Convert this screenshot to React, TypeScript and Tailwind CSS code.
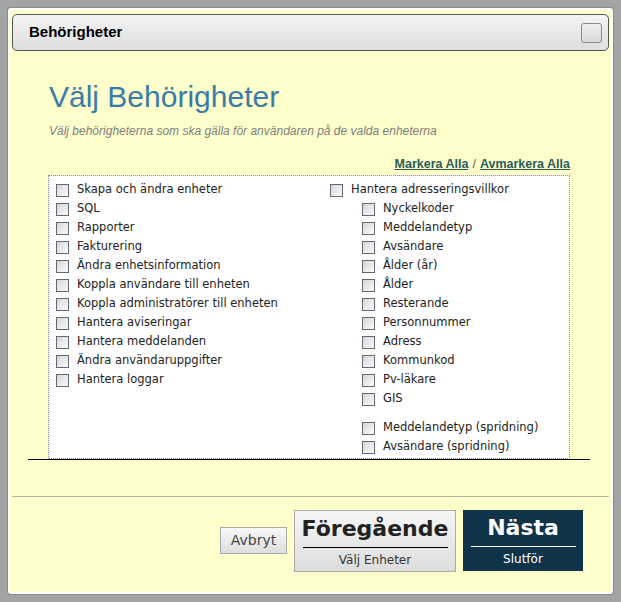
import React from 'react';

const leftItems = [
  'Skapa och ändra enheter',
  'SQL',
  'Rapporter',
  'Fakturering',
  'Ändra enhetsinformation',
  'Koppla användare till enheten',
  'Koppla administratörer till enheten',
  'Hantera aviseringar',
  'Hantera meddelanden',
  'Ändra användaruppgifter',
  'Hantera loggar',
];

const subItems = [
  'Nyckelkoder',
  'Meddelandetyp',
  'Avsändare',
  'Ålder (år)',
  'Ålder',
  'Resterande',
  'Personnummer',
  'Adress',
  'Kommunkod',
  'Pv-läkare',
  'GIS',
];

const spreadItems = ['Meddelandetyp (spridning)', 'Avsändare (spridning)'];

function Check({ label }: { label: string }) {
  return (
    <label className="flex items-center h-[19px] gap-2">
      <span className="w-[13px] h-[13px] shrink-0 border border-[#5f6a75] bg-gradient-to-br from-[#d6d6d6] to-[#fbfbfb]" />
      <span className="text-[#222] text-[11.5px] leading-none">{label}</span>
    </label>
  );
}

export default function App() {
  return (
    <div className="w-[621px] h-[602px] bg-[#a4a4a4] p-2 font-['DejaVu_Sans',sans-serif]">
      <div className="h-full flex flex-col bg-[#ffffcc] border-2 border-white rounded-[3px] shadow-[0_0_0_1px_#8a8a8a]">
        {/* title bar */}
        <div className="mt-1 mx-[2px] h-[37px] flex items-center justify-between rounded-[5px] border border-[#555] bg-gradient-to-b from-[#f4f4f4] to-[#dedede] pl-4 pr-[6px]">
          <span className="font-['Liberation_Sans',sans-serif] font-bold text-[15px] text-black">Behörigheter</span>
          <span className="w-[21px] h-[20px] rounded-[3px] border border-[#888] bg-gradient-to-b from-[#f0f0f0] to-[#d8d8d8]" />
        </div>

        <div className="pl-[38px] pr-[41px] pt-[31px]">
          <h1 className="font-['Liberation_Sans',sans-serif] text-[30px] leading-none text-[#3a7ca8] ml-px">Välj Behörigheter</h1>
          <p className="font-['Liberation_Sans',sans-serif] italic text-[12px] text-[#808080] mt-[10px] ml-px">
            Välj behörigheterna som ska gälla för användaren på de valda enheterna
          </p>
          <div className="mt-[18px] flex justify-end text-[12.5px] font-bold font-['Liberation_Sans',sans-serif] text-[#2a5c5c] leading-none">
            <span className="underline">Markera Alla</span>
            <span className="text-[#555] font-normal mx-1">/</span>
            <span className="underline">Avmarkera Alla</span>
          </div>
          <div className="mt-[4px] h-[284px] bg-white border border-dotted border-[#888] flex pt-[5px] pl-[7px]">
            <div className="w-[274px]">
              {leftItems.map((t) => (
                <Check key={t} label={t} />
              ))}
            </div>
            <div>
              <Check label="Hantera adresseringsvillkor" />
              <div className="pl-[32px]">
                {subItems.map((t) => (
                  <Check key={t} label={t} />
                ))}
                <div className="h-[10px]" />
                {spreadItems.map((t) => (
                  <Check key={t} label={t} />
                ))}
              </div>
            </div>
          </div>
        </div>
        <div className="ml-[18px] w-[562px] h-px bg-black" />

        <div className="mt-[36px] mx-[2px] h-px bg-[#b4b4a0]" />

        <div className="flex justify-end items-center gap-[7px] pr-[28px] mt-[13px]">
          <button className="h-[27px] w-[67px] border border-[#aaa] bg-gradient-to-b from-[#f8f8f8] to-[#dedede] text-[14px] text-[#444]">
            Avbryt
          </button>
          <button className="h-[62px] w-[162px] border border-[#aaa] bg-gradient-to-b from-[#f6f6f6] to-[#dddddd] flex flex-col items-center px-2">
            <span className="text-[22px] font-bold text-[#222] leading-none mt-[7px]">Föregående</span>
            <span className="w-[145px] h-px bg-black mt-[7px]" />
            <span className="text-[12px] text-[#333] mt-[6px] leading-none">Välj Enheter</span>
          </button>
          <button className="h-[61px] w-[120px] bg-[#0f3349] flex flex-col items-center">
            <span className="text-[22px] font-bold text-white leading-none mt-[7px]">Nästa</span>
            <span className="w-[105px] h-px bg-white mt-[7px]" />
            <span className="text-[12px] text-white mt-[6px] leading-none">Slutför</span>
          </button>
        </div>
      </div>
    </div>
  );
}
